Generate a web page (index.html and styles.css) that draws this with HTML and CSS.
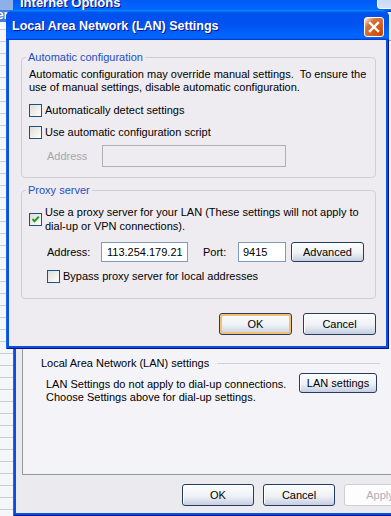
FILE: index.html
```html
<!DOCTYPE html>
<html lang="en">

<head>
    <meta charset="UTF-8">
    <title>Local Area Network (LAN) Settings</title>
    <link rel="stylesheet" href="styles.css">
</head>

<body>
    <div class="desk">
        <!-- window behind, only a strip of it shows -->
        <div class="behind">
            <div class="behind-title"><span>er</span></div>
        </div>

        <!-- Internet Options -->
        <div class="window inet">
            <div class="titlebar">
                <span class="title">Internet Options</span>
                <span class="help"></span>
            </div>
            <div class="window-body inet-body">
                <div class="tabpane">
                    <div class="lan-section">
                        <div class="etched">Local Area Network (LAN) settings</div>
                        <div class="lan-row">
                            <p class="lan-note">LAN Settings do not apply to dial-up connections.<br>Choose Settings above for dial-up settings.</p>
                            <button class="btn lan-btn">LAN settings</button>
                        </div>
                    </div>
                </div>
                <div class="inet-buttons">
                    <button class="btn">OK</button>
                    <button class="btn">Cancel</button>
                    <button class="btn" disabled>Apply</button>
                </div>
            </div>
        </div>

        <!-- LAN Settings dialog -->
        <div class="window lan">
            <div class="titlebar">
                <span class="title">Local Area Network (LAN) Settings</span>
                <span class="close">
                    <svg width="20" height="20" viewBox="0 0 20 20">
                        <path d="M6 6 L14 14 M14 6 L6 14" stroke="#fff" stroke-width="2.4" stroke-linecap="square" />
                    </svg>
                </span>
            </div>
            <div class="window-body lan-body">
                <fieldset class="group">
                    <legend>Automatic configuration</legend>
                    <p class="note">Automatic configuration may override manual settings.&nbsp; To ensure the<br>use of manual settings, disable automatic configuration.</p>
                    <label class="check-row first">
                        <span class="box"></span>
                        <span>Automatically detect settings</span>
                    </label>
                    <label class="check-row">
                        <span class="box"></span>
                        <span>Use automatic configuration script</span>
                    </label>
                    <div class="field-row script-row">
                        <span class="field-label disabled">Address</span>
                        <input type="text" class="textbox script-box" disabled>
                    </div>
                </fieldset>

                <fieldset class="group proxy">
                    <legend>Proxy server</legend>
                    <label class="check-row two-line">
                        <span class="box checked">
                            <svg width="11" height="11" viewBox="0 0 11 11">
                                <path d="M2.5 5 L4.5 7.2 L8.8 2.8" fill="none" stroke="#21a121" stroke-width="2" />
                            </svg>
                        </span>
                        <span>Use a proxy server for your LAN (These settings will not apply to<br>dial-up or VPN connections).</span>
                    </label>
                    <div class="field-row proxy-row">
                        <span class="field-label addr-label">Address:</span>
                        <input type="text" class="textbox addr-box" value="113.254.179.21">
                        <span class="field-label port-label">Port:</span>
                        <input type="text" class="textbox port-box" value="9415">
                        <button class="btn adv-btn">Advanced</button>
                    </div>
                    <label class="check-row bypass">
                        <span class="box"></span>
                        <span>Bypass proxy server for local addresses</span>
                    </label>
                </fieldset>

                <div class="dialog-buttons">
                    <button class="btn default">OK</button>
                    <button class="btn">Cancel</button>
                </div>
            </div>
        </div>
    </div>
</body>

</html>
```

FILE: styles.css
```css
* {
    box-sizing: border-box;
}

body {
    margin: 0;
    font-family: "Liberation Sans", Arial, sans-serif;
    font-size: 11px;
    color: #000;
}

.desk {
    position: relative;
    width: 391px;
    height: 516px;
    overflow: hidden;
    background: #f4f6fa;
}

/* strip of the list window behind */
.behind {
    position: absolute;
    left: 0;
    top: 0;
    width: 14px;
    height: 516px;
    background: repeating-linear-gradient(to bottom, #f4f6fa 0 5px, #c9ccd3 5px 6px, #f4f6fa 6px 12px);
}

.behind-title {
    height: 22px;
    background: linear-gradient(#8db0e8 0 10px, #4d7bd6 10px);
    color: #fff;
    font-weight: bold;
    font-size: 12px;
    line-height: 12px;
    padding-top: 9px;
    overflow: hidden;
    white-space: nowrap;
}

.behind-title span {
    margin-left: -3px;
}

/* XP window frame */
.window {
    position: absolute;
    display: flex;
    flex-direction: column;
    background: #0b4fdc;
    border-radius: 8px 8px 0 0;
    box-shadow: inset 1px 0 #166aee, inset -1px -1px #00138c;
}

.titlebar {
    flex: none;
    display: flex;
    align-items: center;
    height: 30px;
    padding: 1px 5px 0 6px;
    border-radius: 7px 7px 0 0;
    background: linear-gradient(180deg, #0997ff, #0053ee 8%, #0050ee 40%, #06f 88%, #06f 93%, #005bff 95%, #003dd7 96%, #003dd7);
}

.title {
    color: #fff;
    font-weight: bold;
    font-size: 12.5px;
    text-shadow: 1px 1px #0f1089;
    white-space: nowrap;
}

.window-body {
    flex: 1;
    margin: 0 3px 3px;
}

/* Internet Options */
.inet {
    left: 13px;
    top: -18px;
    width: 392px;
    height: 534px;
}

.inet .titlebar {
    position: relative;
    padding-top: 10px;
    padding-left: 7px;
}

.inet .title {
    font-size: 13px;
}

.help {
    position: absolute;
    left: 364px;
    top: 6px;
    width: 21px;
    height: 21px;
    border: 1px solid #fff;
    border-radius: 3px;
    background: linear-gradient(#b9cdf3, #d6e2f8);
}

.inet-body {
    display: flex;
    flex-direction: column;
    background: #ebeaef;
}

.tabpane {
    flex: none;
    height: 435px;
    margin: 28px 0 0 6px;
    border: 1px solid #919b9c;
    background: #f4f4f8;
    display: flex;
    flex-direction: column;
    justify-content: flex-end;
    padding: 0 0 70px 18px;
}

.lan-section {
    width: 339px;
}

.etched {
    display: flex;
    align-items: center;
    gap: 8px;
    line-height: 14px;
    white-space: nowrap;
}

.etched::after {
    content: "";
    flex: 1;
    border-top: 1px solid #d0d0d8;
}

.lan-row {
    display: flex;
    justify-content: space-between;
    margin-top: 3px;
}

.lan-note {
    margin: 5px 0 0;
    padding-left: 5px;
    line-height: 13px;
}

.lan-btn {
    width: 78px;
    height: 20px;
    margin-right: 3px;
}

.inet-buttons {
    display: flex;
    gap: 9px;
    margin-top: 9px;
    padding-left: 166px;
}

.inet-buttons .btn {
    flex: none;
    width: 72px;
    height: 22px;
}

/* buttons */
.btn {
    font: inherit;
    color: #000;
    padding: 0;
    border: 1px solid #243b62;
    border-radius: 3px;
    background: linear-gradient(#fcfdfe, #eef1f6 55%, #c6cee0);
    box-shadow: inset 1px 1px #fff;
}

.btn.default {
    box-shadow: inset 0 0 0 2px #f3c06c;
}

.btn:disabled {
    color: #aeaeb4;
    border-color: #cfcfd4;
    background: #fdfdfd;
    box-shadow: none;
}

/* LAN dialog */
.lan {
    left: 6px;
    top: 10px;
    width: 383px;
    height: 339px;
}

.close {
    display: flex;
    margin-left: auto;
    margin-top: 2px;
    width: 20px;
    height: 20px;
    border: 1px solid #fff;
    border-radius: 3px;
    background: radial-gradient(circle at 90% 90%, #cc4600 0%, #dc6527 55%, #cd7546 70%, #ffccb2 90%, #fff 100%);
    align-items: center;
    justify-content: center;
}

.close svg {
    flex: none;
}

.lan-body {
    display: flex;
    flex-direction: column;
    padding: 10px 10px 0 12px;
    background: #eeecf1;
}

.group {
    margin: 0;
    min-width: 0;
    padding: 4px 7px 10px;
    border: 1px solid #cfcdd6;
    border-radius: 4px;
}

.group legend {
    margin-left: -3px;
    padding: 0 2px;
    line-height: 14px;
    color: #1e4ec2;
}

.group.proxy {
    margin-top: 5px;
    padding-top: 8px;
    padding-bottom: 14px;
}

.note {
    margin: 0;
    line-height: 13px;
    white-space: nowrap;
}

.check-row {
    display: flex;
    align-items: center;
    gap: 3px;
    height: 16px;
    margin-top: 6px;
    white-space: nowrap;
}

.check-row.first {
    margin-top: 8px;
}

.check-row.two-line {
    height: auto;
    margin-top: 0;
    line-height: 14px;
}

.check-row.bypass {
    padding-left: 18px;
    margin-top: 6px;
}

.box {
    flex: none;
    display: flex;
    width: 13px;
    height: 13px;
    border: 1px solid #1c5180;
    background: linear-gradient(135deg, #dcdcd7, #fff);
}

.field-row {
    display: flex;
    align-items: center;
    padding-left: 18px;
}

.script-row {
    margin-top: 5px;
}

.proxy-row {
    margin-top: 9px;
}

.field-label.disabled {
    color: #a5a5a8;
    width: 55px;
}

.textbox {
    font: inherit;
    color: #000;
    margin: 0;
    border: 1px solid #7f9db9;
    background: #fff;
    padding: 0 4px;
}

.textbox:disabled {
    border-color: #b0b0b4;
    background: transparent;
}

.script-box {
    width: 184px;
    height: 22px;
}

.addr-label {
    width: 54px;
}

.addr-box {
    width: 87px;
    height: 20px;
    padding-left: 5px;
}

.port-label {
    width: 35px;
    margin-left: 15px;
}

.port-box {
    width: 48px;
    height: 20px;
}

.adv-btn {
    width: 73px;
    height: 20px;
    margin-left: 5px;
}

.dialog-buttons {
    display: flex;
    justify-content: flex-end;
    gap: 11px;
    margin-top: 14px;
}

.dialog-buttons .btn {
    width: 73px;
    height: 22px;
}
```
